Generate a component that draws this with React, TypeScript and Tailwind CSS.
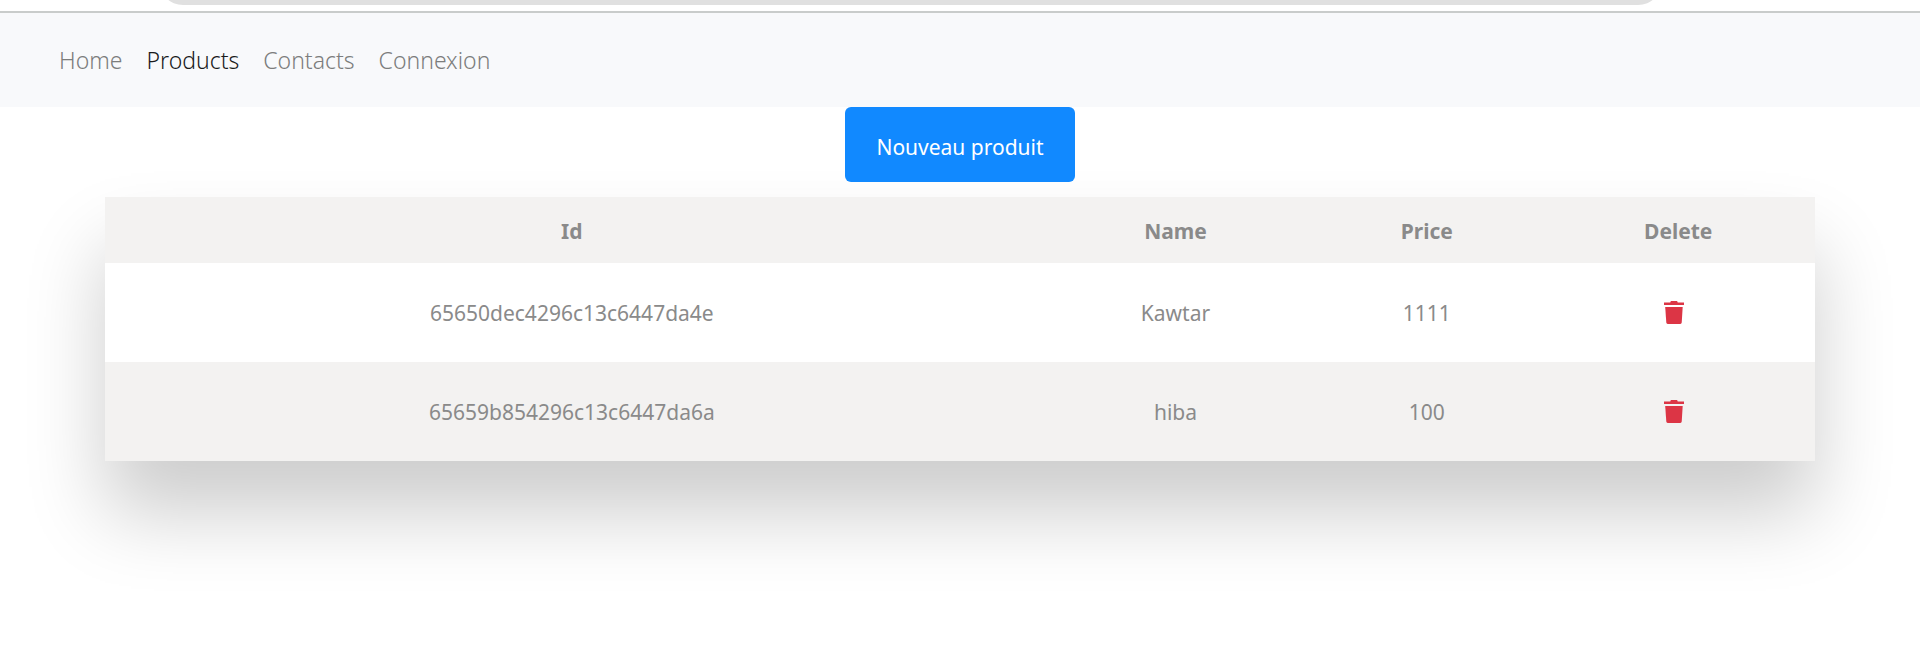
import React from 'react';

type Product = { id: string; name: string; price: number };

const links = ['Home', 'Products', 'Contacts', 'Connexion'];

const products: Product[] = [
  { id: '65650dec4296c13c6447da4e', name: 'Kawtar', price: 1111 },
  { id: '65659b854296c13c6447da6a', name: 'hiba', price: 100 },
];

function TrashIcon() {
  return (
    <svg viewBox="0 0 20 23" className="h-[23px] w-5" fill="currentColor" aria-hidden="true">
      <path d="M0 1.500h6.300c0-.8.5-1.500 1.200-1.500h5c.7 0 1.200.7 1.200 1.500H20V4H0z" />
      <path d="M1.200 6h17.500l-1 15.600c-.1.8-.6 1.400-1.400 1.400H3.700c-.8 0-1.300-.6-1.400-1.400z" />
    </svg>
  );
}

function NavBar() {
  return (
    <nav className="flex h-[94px] items-center gap-6 bg-[#f8f9fb] px-[59px] text-[23px] leading-8 font-[350] text-[#7c7d7d]">
      {links.map((label) => (
        <a
          key={label}
          href="#"
          aria-current={label === 'Products' ? 'page' : undefined}
          className={label === 'Products' ? 'text-[#1a1b1b]' : ''}
        >
          {label}
        </a>
      ))}
    </nav>
  );
}

function ProductTable() {
  return (
    <table className="w-full table-fixed text-center text-[21px] leading-[33px] text-[#8a8a8a] shadow-[0_52px_75px_rgba(0,0,0,0.2)]">
      <colgroup>
        <col className="w-[54.6%]" />
        <col className="w-[16%]" />
        <col className="w-[13.4%]" />
        <col className="w-[16%]" />
      </colgroup>
      <thead className="bg-[#f3f2f1]">
        <tr className="h-[66px]">
          <th className="pt-0.5">Id</th>
          <th className="pt-0.5">Name</th>
          <th className="pt-0.5">Price</th>
          <th className="pt-0.5">Delete</th>
        </tr>
      </thead>
      <tbody>
        {products.map((product) => (
          <tr key={product.id} className="h-[99px] bg-white even:bg-[#f3f2f1]">
            <td className="pt-0.5">{product.id}</td>
            <td className="pt-0.5">{product.name}</td>
            <td className="pt-0.5">{product.price}</td>
            <td>
              <div className="flex justify-center pr-2">
                <button type="button" aria-label={`Delete ${product.name}`} className="text-[#dc3545]">
                  <TrashIcon />
                </button>
              </div>
            </td>
          </tr>
        ))}
      </tbody>
    </table>
  );
}

export default function App() {
  return (
    <div className="min-h-screen bg-white font-['Noto_Sans','Open_Sans',sans-serif]">
      <div className="h-[13px] border-b-2 border-[#c9cccb] bg-white pr-[258px] pl-[159px]">
        <div className="flex h-[5px] items-end overflow-hidden">
          <div className="h-12 w-full shrink-0 rounded-full bg-[#e0e0e0]" />
        </div>
      </div>
      <NavBar />
      <main className="px-[105px]">
        <div className="flex justify-center pb-[15px]">
          <button
            type="button"
            className="h-[75px] w-[230px] rounded-md bg-[#1189ff] pt-1 text-[21px] leading-8 text-white"
          >
            Nouveau produit
          </button>
        </div>
        <ProductTable />
      </main>
    </div>
  );
}
